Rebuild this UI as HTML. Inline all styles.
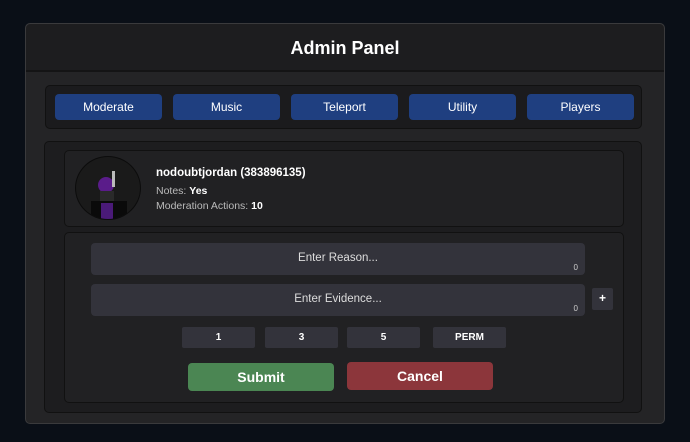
<!DOCTYPE html>
<html><head><style>
*{box-sizing:border-box;margin:0;padding:0}
body{width:690px;height:442px;background:#0a0f17;font-family:"Liberation Sans",sans-serif;position:relative;overflow:hidden;color:#fff}
.a{position:absolute}
.panel{left:25px;top:23px;width:640px;height:401px;background:#242426;border:1px solid #3a3a3c;border-radius:5px}
.title{left:26px;top:24px;width:638px;height:48px;background:#1d1d1f;border-bottom:2px solid #141415;border-radius:5px 5px 0 0;text-align:center;font-weight:bold;font-size:18px;line-height:48px}
.box{background:#1b1b1d;border:1px solid #111;border-radius:5px}
.tab{top:94px;width:107px;height:26px;background:#1f3f80;border-radius:4px;font-size:12px;line-height:26px;text-align:center}
.inp{left:91px;width:494px;height:32px;background:#33333b;border-radius:4px;text-align:center;font-size:11.5px;line-height:31px;color:#ddd}
.inp span{position:absolute;right:7px;bottom:2px;font-size:8px;line-height:10px;color:#ccc}
.d{top:327px;width:73px;height:21px;background:#33333b;border-radius:2px;text-align:center;font-size:10px;font-weight:bold;line-height:21px}
.btn{width:146px;height:28px;border-radius:4px;text-align:center;font-weight:bold;font-size:14px;line-height:28px}
</style></head><body>
<div class="a panel"></div>
<div class="a title">Admin Panel</div>
<div class="a box" style="left:45px;top:85px;width:597px;height:44px"></div>
<div class="a tab" style="left:55px">Moderate</div>
<div class="a tab" style="left:173px">Music</div>
<div class="a tab" style="left:291px">Teleport</div>
<div class="a tab" style="left:409px">Utility</div>
<div class="a tab" style="left:527px">Players</div>
<div class="a box" style="left:44px;top:141px;width:598px;height:272px;background:#1d1d1f"></div>
<div class="a box" style="left:64px;top:150px;width:560px;height:77px;background:#212123"></div>
<div class="a" style="left:75px;top:156px;width:66px;height:64px;border-radius:50%;background:#1a1a1a;border:1px solid #0c0c0c;overflow:hidden">
 <div class="a" style="left:22px;top:20px;width:16px;height:16px;border-radius:50%;background:#5a1c8a"></div>
 <div class="a" style="left:24px;top:34px;width:14px;height:10px;background:#2a2a2a"></div>
 <div class="a" style="left:15px;top:44px;width:36px;height:20px;background:#0a0a0a"></div>
 <div class="a" style="left:25px;top:46px;width:12px;height:18px;background:#4a1a78"></div>
 <div class="a" style="left:36px;top:14px;width:3px;height:16px;background:#bbb"></div>
</div>
<div class="a" style="left:156px;top:167px;font-size:11.5px;font-weight:bold">nodoubtjordan (383896135)</div>
<div class="a" style="left:156px;top:185px;font-size:10.5px;color:#bbb">Notes: <b style="color:#fff">Yes</b></div>
<div class="a" style="left:156px;top:200px;font-size:10.5px;color:#bbb">Moderation Actions: <b style="color:#fff">10</b></div>
<div class="a box" style="left:64px;top:232px;width:560px;height:171px;background:#212123"></div>
<div class="a inp" style="top:243px">Enter Reason...<span>0</span></div>
<div class="a inp" style="top:284px">Enter Evidence...<span>0</span></div>
<div class="a" style="left:592px;top:288px;width:21px;height:22px;background:#33333b;border-radius:2px;text-align:center;font-weight:bold;font-size:12px;line-height:21px">+</div>
<div class="a d" style="left:182px">1</div>
<div class="a d" style="left:265px">3</div>
<div class="a d" style="left:347px">5</div>
<div class="a d" style="left:433px">PERM</div>
<div class="a btn" style="left:188px;top:363px;background:#4b8653">Submit</div>
<div class="a btn" style="left:347px;top:362px;background:#8c363b">Cancel</div>
</body></html>
